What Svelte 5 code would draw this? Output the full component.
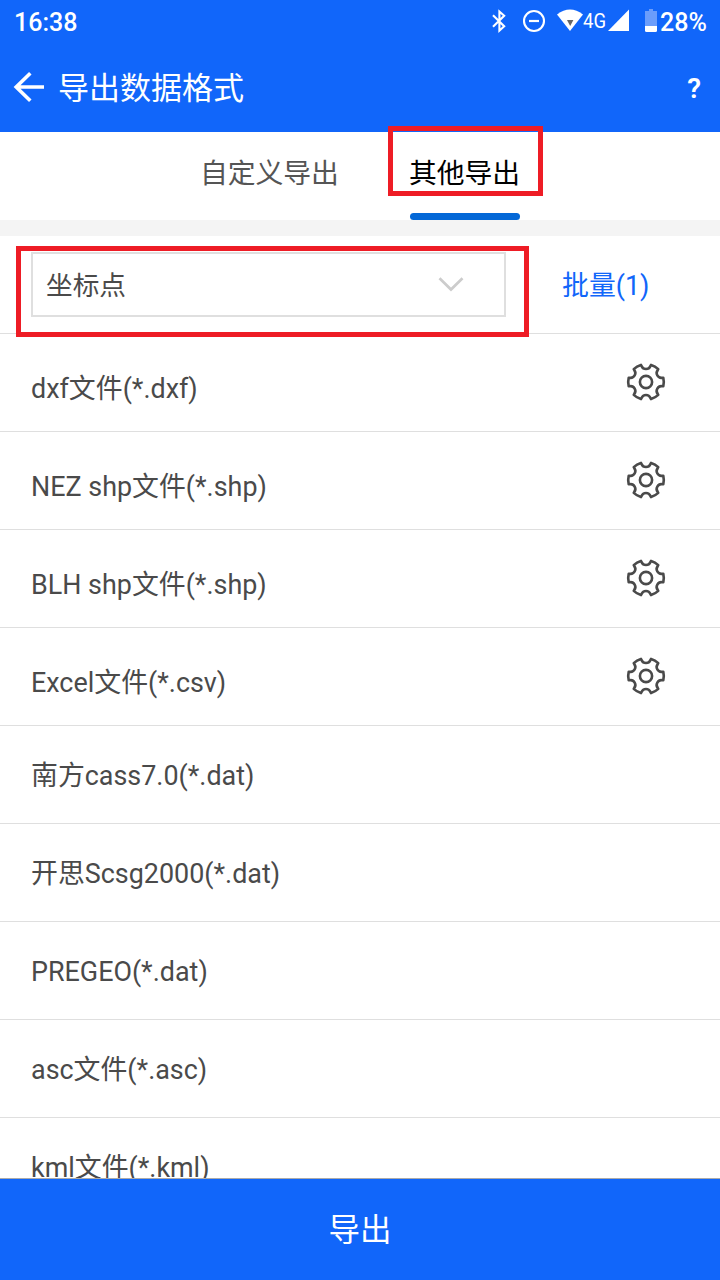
<script>
  const formats = [
    { name: 'dxf文件(*.dxf)', configurable: true },
    { name: 'NEZ shp文件(*.shp)', configurable: true },
    { name: 'BLH shp文件(*.shp)', configurable: true },
    { name: 'Excel文件(*.csv)', configurable: true },
    { name: '南方cass7.0(*.dat)', configurable: false },
    { name: '开思Scsg2000(*.dat)', configurable: false },
    { name: 'PREGEO(*.dat)', configurable: false },
    { name: 'asc文件(*.asc)', configurable: false },
    { name: 'kml文件(*.kml)', configurable: false }
  ];

  // Gear outline: six outer arcs joined by six concave notches.
  const at = (deg, r) => {
    const a = (deg * Math.PI) / 180;
    return `${(20 + r * Math.cos(a)).toFixed(2)} ${(20 + r * Math.sin(a)).toFixed(2)}`;
  };
  let gear = '';
  for (let k = 0; k < 6; k++) {
    const n = 30 + k * 60;
    gear += `${k ? 'A17.8 17.8 0 0 1 ' : 'M'}${at(n - 16.5, 17.8)}L${at(n - 15.5, 16.7)}A4.8 4.8 0 0 0 ${at(n + 15.5, 16.7)}L${at(n + 16.5, 17.8)}`;
  }
  gear += `A17.8 17.8 0 0 1 ${at(373.5, 17.8)}Z`;
</script>

<div class="screen">
  <header>
    <div class="status">
      <span class="time">16:38</span>
      <svg class="indicators" width="178" height="44" viewBox="480 0 178 44">
        <path d="M493 15.2 504.2 26.2 499.4 30.7V11.5L504.2 15.8 493 26.8" fill="none" stroke="#fff" stroke-width="2.1" />
        <circle cx="534" cy="21" r="10" fill="none" stroke="#fff" stroke-width="2.1" />
        <path d="M529 21h10" stroke="#fff" stroke-width="2.2" />
        <path d="M557 14.5Q570 4.5 583 14.5L570 31Z" fill="#fff" />
        <path d="M567 20h6.4l-3.2 6z" fill="#666" />
        <text x="583" y="27.5" class="network" textLength="23" lengthAdjust="spacingAndGlyphs">4G</text>
        <path d="M608 31H629V9.5Z" fill="#fff" />
        <path d="M645 11h4V9h4v2h4v15h-12z" fill="#6b9dfb" />
        <path d="M645 26h12v4.5q0 1.5-1.5 1.5h-9q-1.5 0-1.5-1.5z" fill="#fff" />
      </svg>
      <span class="battery">28%</span>
    </div>
    <div class="titlebar">
      <svg width="32" height="32" viewBox="0 0 32 32"><path d="M17.3 2.2 3.2 16 17.3 29.8M3.2 16H31" fill="none" stroke="#fff" stroke-width="3.6" /></svg>
      <h1>导出数据格式</h1>
      <span class="help">?</span>
    </div>
  </header>

  <nav>
    <span class="tab">自定义导出</span>
    <span class="tab active">其他导出<i class="mark"></i></span>
  </nav>

  <div class="filter">
    <div class="select">
      <span>坐标点</span>
      <svg width="26" height="16" viewBox="0 0 26 16"><path d="M1.5 1.3 13 12.5 24.5 1.3" fill="none" stroke="#ccc" stroke-width="2.7" /></svg>
    </div>
    <span class="batch">批量(1)</span>
    <i class="mark"></i>
  </div>

  <ul>
    {#each formats as format}
      <li class:configurable={format.configurable}>
        <span>{format.name}</span>
        {#if format.configurable}
          <svg width="40" height="40" viewBox="0 0 40 40" fill="none" stroke="#4a4a4a" stroke-width="2.6" stroke-linejoin="round">
            <path d={gear} />
            <circle cx="20" cy="20" r="6.1" />
          </svg>
        {/if}
      </li>
    {/each}
  </ul>

  <footer>导出</footer>
</div>

<style>
  .screen {
    display: flex;
    flex-direction: column;
    width: 720px;
    height: 1280px;
    overflow: hidden;
    background: #fff;
    color: #4a4a4a;
    font-family: Roboto, 'Noto Sans CJK SC', sans-serif;
    font-size: 26.9px;
  }
  header {
    flex: none;
    height: 132px;
    background: #1166fa;
    color: #fff;
  }
  .status {
    display: flex;
    height: 44px;
    align-items: center;
    padding: 0 14px;
    font-size: 25px;
    font-weight: 500;
    line-height: 42px;
  }
  .time, .battery { padding-top: 2px; }
  .indicators { margin-left: auto; margin-right: 2px; }
  .battery { width: 46px; }
  .network { font-size: 21px; font-weight: 400; fill: #fff; }
  .titlebar {
    display: flex;
    align-items: center;
    height: 88px;
    padding: 0 19px 0 13px;
  }
  .titlebar svg { margin-top: -3px; }
  h1 {
    margin: 0 0 0 13px;
    padding-top: 2px;
    font-size: 31px;
    font-weight: 400;
    line-height: 86px;
  }
  .help { margin-left: auto; font-size: 28px; font-weight: 600; }
  nav {
    display: flex;
    flex: none;
    justify-content: center;
    gap: 70px;
    height: 88px;
    border-bottom: 16px solid #f4f4f4;
    font-size: 27.8px;
    line-height: 83px;
  }
  .tab { color: #555; }
  .active {
    position: relative;
    color: #000;
  }
  .active::after {
    content: '';
    position: absolute;
    left: 1px;
    right: 0;
    bottom: 0;
    height: 7px;
    border-radius: 3.5px;
    background: #0468d7;
  }
  .mark {
    position: absolute;
    box-sizing: border-box;
    border: 5px solid #ee1c25;
  }
  .active .mark { left: -21.2px; top: -6px; width: 155px; height: 70px; }
  .filter {
    position: relative;
    display: flex;
    flex: none;
    box-sizing: border-box;
    height: 98px;
    padding: 16px 31px 0;
    border-bottom: 1px solid #dfdfdf;
    line-height: 69px;
  }
  .filter .mark { left: 16px; top: 10px; width: 513px; height: 91px; z-index: 1; }
  .select {
    display: flex;
    justify-content: space-between;
    align-items: center;
    box-sizing: border-box;
    width: 475px;
    height: 65px;
    padding: 0 40px 0 13px;
    border: 2px solid #dfdfdf;
    font-size: 26.67px;
    line-height: 58px;
  }
  .select span { padding-top: 3px; }
  .batch { margin-left: 56px; color: #1166fa; }
  ul {
    flex: 1;
    min-height: 0;
    margin: 0;
    padding: 0;
    overflow: hidden;
    list-style: none;
  }
  li {
    display: flex;
    justify-content: space-between;
    box-sizing: border-box;
    height: 98px;
    padding: 0 54px 0 31px;
    border-bottom: 1px solid #dfdfdf;
    line-height: 100px;
  }
  li.configurable { line-height: 110px; }
  li svg { margin-top: 28px; }
  footer {
    flex: none;
    box-sizing: border-box;
    height: 102px;
    border-top: 1px solid #aaa;
    background: #1166fa;
    color: #fff;
    font-size: 31.5px;
    line-height: 103px;
    text-align: center;
  }
</style>
